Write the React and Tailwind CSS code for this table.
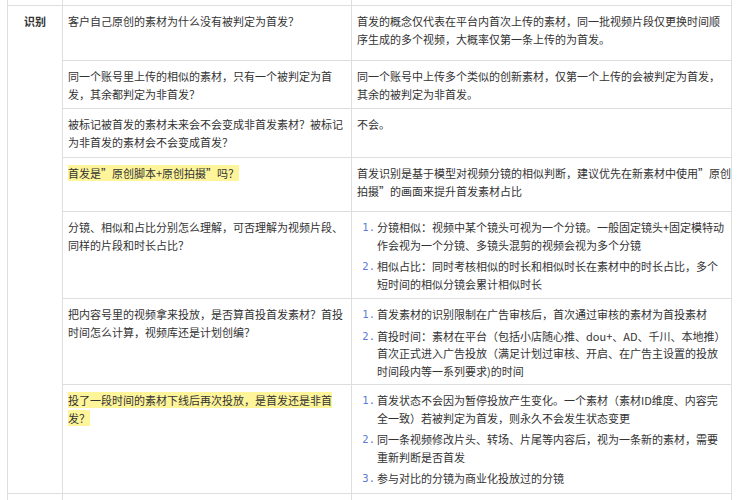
import React from "react";

const B = "border-[#dedede]";

function Lines({ lines }) {
  return (
    <>
      {lines.map((l, i) => (
        <div key={i} className="whitespace-nowrap">
          {l}
        </div>
      ))}
    </>
  );
}

function HLines({ lines }) {
  return (
    <>
      {lines.map((l, i) => (
        <div key={i} className="whitespace-nowrap">
          <span className="bg-[#fef59b]">{l}</span>
        </div>
      ))}
    </>
  );
}

function List({ items }) {
  return (
    <div className="flex flex-col gap-[4px]">
      {items.map((lines, i) => (
        <div key={i} className="flex">
          <span className="w-[20px] shrink-0 pr-[2px] text-right font-['DejaVu_Sans_Mono',monospace] text-[10.5px] text-[#5b7bd6]">
            {i + 1}.
          </span>
          <div>
            <Lines lines={lines} />
          </div>
        </div>
      ))}
    </div>
  );
}

function Row({ h, q, a, last }) {
  return (
    <div className={`flex ${h} ${last ? "" : "border-b " + B}`}>
      <div className={`w-[289px] shrink-0 border-r ${B} pl-[5px] pt-[7px]`}>{q}</div>
      <div className="flex-1 pl-[5px] pt-[7px]">{a}</div>
    </div>
  );
}

function Stub({ h, bottomBorder }) {
  return (
    <div className={`flex ${h} ${bottomBorder ? "border-b " + B : ""}`}>
      <div className={`w-[55px] shrink-0 border-r ${B}`} />
      <div className={`w-[289px] shrink-0 border-r ${B}`} />
      <div className="flex-1" />
    </div>
  );
}

export default function App() {
  return (
    <div className="h-[500px] w-[741px] overflow-hidden bg-white font-['Noto_Sans_CJK_SC','Noto_Sans',sans-serif] text-[11px] leading-[17.5px] text-[#333]">
      <div className={`ml-[7px] w-[725px] border-x ${B}`}>
        <Stub h="h-[6px]" bottomBorder />
        <div className={`flex border-b ${B}`}>
          <div className={`w-[55px] shrink-0 border-r ${B} pt-[7px] text-center font-bold`}>识别</div>
          <div className="flex flex-1 flex-col">
            <Row
              h="h-[55px]"
              q={<Lines lines={["客户自己原创的素材为什么没有被判定为首发？"]} />}
              a={
                <Lines
                  lines={[
                    "首发的概念仅代表在平台内首次上传的素材，同一批视频片段仅更换时间顺",
                    "序生成的多个视频，大概率仅第一条上传的为首发。",
                  ]}
                />
              }
            />
            <Row
              h="h-[48px]"
              q={<Lines lines={["同一个账号里上传的相似的素材，只有一个被判定为首", "发，其余都判定为非首发？"]} />}
              a={
                <Lines
                  lines={[
                    "同一个账号中上传多个类似的创新素材，仅第一个上传的会被判定为首发，",
                    "其余的被判定为非首发。",
                  ]}
                />
              }
            />
            <Row
              h="h-[49px]"
              q={
                <Lines
                  lines={["被标记被首发的素材未来会不会变成非首发素材？被标记", "为非首发的素材会不会变成首发？"]}
                />
              }
              a={<Lines lines={["不会。"]} />}
            />
            <Row
              h="h-[54px]"
              q={<HLines lines={["首发是”原创脚本+原创拍摄”吗？"]} />}
              a={
                <Lines
                  lines={[
                    "首发识别是基于模型对视频分镜的相似判断，建议优先在新素材中使用”原创",
                    "拍摄”的画面来提升首发素材占比",
                  ]}
                />
              }
            />
            <Row
              h="h-[87px]"
              q={
                <Lines
                  lines={["分镜、相似和占比分别怎么理解，可否理解为视频片段、", "同样的片段和时长占比？"]}
                />
              }
              a={
                <List
                  items={[
                    [
                      "分镜相似：视频中某个镜头可视为一个分镜。一般固定镜头+固定模特动",
                      "作会视为一个分镜、多镜头混剪的视频会视为多个分镜",
                    ],
                    [
                      "相似占比：同时考核相似的时长和相似时长在素材中的时长占比，多个",
                      "短时间的相似分镜会累计相似时长",
                    ],
                  ]}
                />
              }
            />
            <Row
              h="h-[86px]"
              q={
                <Lines
                  lines={["把内容号里的视频拿来投放，是否算首投首发素材？首投", "时间怎么计算，视频库还是计划创编？"]}
                />
              }
              a={
                <List
                  items={[
                    ["首发素材的识别限制在广告审核后，首次通过审核的素材为首投素材"],
                    [
                      "首投时间：素材在平台（包括小店随心推、dou+、AD、千川、本地推）",
                      "首次正式进入广告投放（满足计划过审核、开启、在广告主设置的投放",
                      "时间段内等一系列要求)的时间",
                    ],
                  ]}
                />
              }
            />
            <Row
              h="h-[108px]"
              last
              q={<HLines lines={["投了一段时间的素材下线后再次投放，是首发还是非首", "发？"]} />}
              a={
                <List
                  items={[
                    [
                      "首发状态不会因为暂停投放产生变化。一个素材（素材ID维度、内容完",
                      "全一致）若被判定为首发，则永久不会发生状态变更",
                    ],
                    [
                      "同一条视频修改片头、转场、片尾等内容后，视为一条新的素材，需要",
                      "重新判断是否首发",
                    ],
                    ["参与对比的分镜为商业化投放过的分镜"],
                  ]}
                />
              }
            />
          </div>
        </div>
        <Stub h="h-[10px]" />
      </div>
    </div>
  );
}
